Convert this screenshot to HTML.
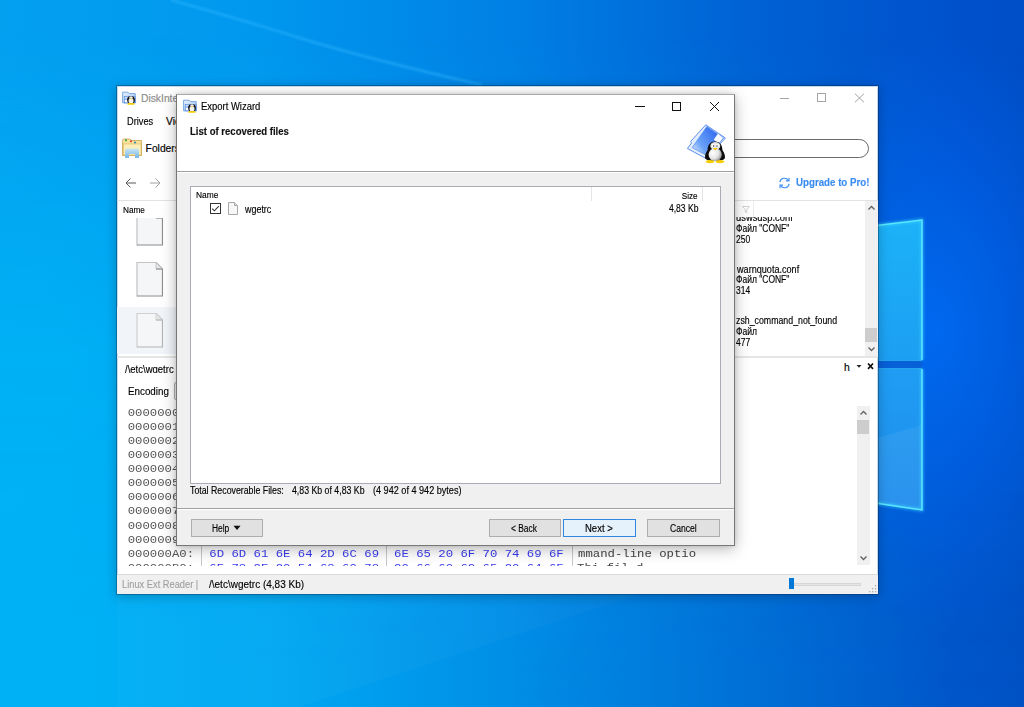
<!DOCTYPE html>
<html><head><meta charset="utf-8">
<style>
*{margin:0;padding:0;box-sizing:border-box}
html,body{width:1024px;height:707px;overflow:hidden}
body{position:relative;font-family:"Liberation Sans",sans-serif;font-size:12px;color:#000;background:#0080e4}
.a{position:absolute;white-space:nowrap}
.t{position:absolute;white-space:nowrap;line-height:1;-webkit-text-stroke:0.15px currentColor}
</style></head><body>
<svg class="a" style="left:0;top:0" width="1024" height="707" viewBox="0 0 1024 707">
<defs>
<linearGradient id="gt" x1="0" y1="0" x2="1024" y2="0" gradientUnits="userSpaceOnUse">
<stop offset="0" stop-color="#04a0f0"/><stop offset="0.06" stop-color="#039eef"/><stop offset="0.25" stop-color="#0098ef"/><stop offset="0.5" stop-color="#0080e4"/><stop offset="0.73" stop-color="#0062d4"/><stop offset="0.94" stop-color="#0050cc"/><stop offset="1" stop-color="#004ec8"/>
</linearGradient>
<linearGradient id="gb" x1="0" y1="0" x2="1024" y2="0" gradientUnits="userSpaceOnUse">
<stop offset="0" stop-color="#00b2f5"/><stop offset="0.06" stop-color="#00b2f5"/><stop offset="0.27" stop-color="#00a8f2"/><stop offset="0.5" stop-color="#008ee6"/><stop offset="0.73" stop-color="#0070d6"/><stop offset="0.94" stop-color="#0055c8"/><stop offset="1" stop-color="#0052c4"/>
</linearGradient>
<linearGradient id="gm" x1="0" y1="0" x2="0" y2="707" gradientUnits="userSpaceOnUse">
<stop offset="0.05" stop-color="#fff" stop-opacity="0"/><stop offset="0.5" stop-color="#fff" stop-opacity="0.9"/><stop offset="1" stop-color="#fff" stop-opacity="1"/>
</linearGradient>
<mask id="mb"><rect width="1024" height="707" fill="url(#gm)"/></mask>
<radialGradient id="glow" cx="0" cy="0" r="1" gradientUnits="userSpaceOnUse" gradientTransform="translate(935 330) scale(170 300)">
<stop offset="0" stop-color="#006cf6" stop-opacity="0.85"/><stop offset="0.55" stop-color="#0064f0" stop-opacity="0.45"/><stop offset="1" stop-color="#0060ee" stop-opacity="0"/>
</radialGradient>
<linearGradient id="pu" x1="0" y1="220" x2="0" y2="360" gradientUnits="userSpaceOnUse"><stop offset="0" stop-color="#1cb2f8"/><stop offset="1" stop-color="#1c9ff2"/></linearGradient>
<linearGradient id="pl" x1="0" y1="369" x2="0" y2="510" gradientUnits="userSpaceOnUse"><stop offset="0" stop-color="#1f9df3"/><stop offset="1" stop-color="#1e8cec"/></linearGradient>
<filter id="bl" x="-20%" y="-20%" width="140%" height="140%"><feGaussianBlur stdDeviation="1.6"/></filter>
</defs>
<rect width="1024" height="707" fill="url(#gt)"/>
<rect width="1024" height="707" fill="url(#gb)" mask="url(#mb)"/>
<rect width="1024" height="707" fill="url(#glow)"/>
<rect x="870" y="359" width="52" height="11" fill="#0860d8"/>
<polygon points="870,226.2 922,220 922,360 870,360" fill="url(#pu)"/>
<polygon points="870,369 922,369 922,510 870,502.3" fill="url(#pl)"/>
<polygon points="870,440 922,425 922,510 870,502" fill="#fff" opacity="0.06"/>
<g filter="url(#bl)" opacity="0.6">
<polyline points="870,226.2 922,220 922,360" fill="none" stroke="#40d8ff" stroke-width="3"/>
<polyline points="870,502.3 922,510 922,369" fill="none" stroke="#40d8ff" stroke-width="3"/>
</g>
<polyline points="870,226.2 922,220 922,360" fill="none" stroke="#5ae6ff" stroke-width="1.5"/>
<polyline points="870,502.3 922,510 922,369" fill="none" stroke="#5ae6ff" stroke-width="1.5"/>
<polyline points="870,360.5 922,360.5" fill="none" stroke="#38c0f8" stroke-width="1" opacity="0.7"/>
<polyline points="870,368.5 922,368.5" fill="none" stroke="#38c0f8" stroke-width="1" opacity="0.7"/>
<filter id="rb" x="-10%" y="-50%" width="120%" height="200%"><feGaussianBlur stdDeviation="0.9"/></filter>
<path d="M171 0 Q 236 18 300 37.9 T 482 85" fill="none" stroke="#30b8ff" stroke-opacity="0.5" stroke-width="2.6" filter="url(#rb)"/>
<polygon points="117,594 640,594 300,707 117,707" fill="#ffffff" opacity="0.025"/>
</svg>

<div class="a" style="left:116px;top:85px;width:763px;height:510px;background:#fff;background-clip:padding-box;border:1px solid rgba(0,25,60,.32);box-shadow:0 2px 10px rgba(0,0,0,.22),inset 0 0 0 1px rgba(0,80,140,.22)"></div>
<svg class="a" style="left:122px;top:91px" width="14" height="14" viewBox="0 0 14 14">
<defs><linearGradient id="af122" x1="0" y1="0" x2="1" y2="1"><stop offset="0" stop-color="#e8f2fd"/><stop offset="1" stop-color="#9cc4f2"/></linearGradient>
<linearGradient id="ag122" x1="0" y1="0" x2="0" y2="1"><stop offset="0" stop-color="#d8e8fb"/><stop offset="1" stop-color="#4d8de6"/></linearGradient></defs>
<path d="M0.6 1.2 H6 L7.5 2.6 H13.2 V11.8 H0.6 Z" fill="url(#af122)" stroke="#6d9fe2" stroke-width="0.9"/>
<rect x="2.2" y="5.4" width="11" height="6.6" fill="url(#ag122)" stroke="#4f86de" stroke-width="0.6"/>
<rect x="2.8" y="9" width="3" height="2.4" fill="#fff"/>
<ellipse cx="9" cy="8.8" rx="3.9" ry="3.9" fill="#151515"/>
<ellipse cx="9" cy="9.8" rx="2.5" ry="2.8" fill="#f2f2f2"/>
<ellipse cx="9" cy="6.6" rx="1.7" ry="1.4" fill="#e8e8e8"/>
<path d="M8.1 7.5 L9.9 7.5 L9 8.7Z" fill="#f0c800"/>
<ellipse cx="7.3" cy="12.9" rx="2.1" ry="0.9" fill="#f5d000"/>
<ellipse cx="10.7" cy="12.9" rx="2.1" ry="0.9" fill="#f5d000"/>
</svg>
<span id="t0" class="t" style="left:141.00px;top:94.48px;font-size:10.3px;font-weight:normal;color:#8c8c8c;font-family:'Liberation Sans',sans-serif;">DiskInternals Linux Reader</span>
<div class="a" style="left:780px;top:98px;width:9px;height:1px;background:#a4a4a4"></div>
<div class="a" style="left:817px;top:93px;width:9px;height:9px;border:1px solid #a4a4a4"></div>
<svg class="a" style="left:854px;top:93px" width="11" height="10" viewBox="0 0 11 10"><path d="M1 0.8 L10 9.2 M10 0.8 L1 9.2" stroke="#a4a4a4" stroke-width="1"/></svg>
<span id="t1" class="t" style="left:126.80px;top:117.18px;font-size:10.3px;font-weight:normal;color:#000;font-family:'Liberation Sans',sans-serif;transform:scaleX(0.8957);transform-origin:left top;">Drives</span>
<span id="t2" class="t" style="left:166.10px;top:117.18px;font-size:10.3px;font-weight:normal;color:#000;font-family:'Liberation Sans',sans-serif;">View</span>
<svg class="a" style="left:122px;top:138px" width="22" height="22" viewBox="0 0 22 22">
<defs><linearGradient id="fy" x1="0" y1="0" x2="0" y2="1"><stop offset="0" stop-color="#f8e6a6"/><stop offset="1" stop-color="#e9c766"/></linearGradient>
<linearGradient id="fb" x1="0" y1="0" x2="0" y2="1"><stop offset="0" stop-color="#c6e4f6"/><stop offset="1" stop-color="#6fb4e4"/></linearGradient></defs>
<path d="M0.5 2.5 Q0.5 1 2 1 H8 L9.5 2.5 H19.5 V17.5 H0.5 Z" fill="url(#fy)" stroke="#c9a550" stroke-width="0.8"/>
<rect x="1.5" y="6" width="17.5" height="11" fill="#fbeeb8" stroke="#d9b65c" stroke-width="0.5"/>
<circle cx="4" cy="2.2" r="1" fill="#2a9a3a"/><circle cx="9" cy="3.2" r="1" fill="#e03020"/><circle cx="13" cy="4.5" r="1" fill="#2a7fd0"/>
<path d="M3 20 V12.5 Q3 10.5 5 10.5 H15 Q17 10.5 17 12.5 V20 H13 V16 H7 V20 Z" fill="url(#fb)" opacity="0.95"/>
</svg>
<span id="t3" class="t" style="left:145.60px;top:144.18px;font-size:10.3px;font-weight:normal;color:#000;font-family:'Liberation Sans',sans-serif;">Folders</span>
<svg class="a" style="left:124px;top:177px" width="40" height="13" viewBox="0 0 40 13"><path d="M6.5 1.5 L2 6 L6.5 10.5 M2 6 H12" fill="none" stroke="#5a5a5a" stroke-width="1"/><path d="M31.5 1.5 L36 6 L31.5 10.5 M36 6 H26" fill="none" stroke="#a0a0a0" stroke-width="1"/></svg>
<div class="a" style="left:560px;top:139px;width:309px;height:19px;border:1.4px solid #6a6a6a;border-radius:10px"></div>
<svg class="a" style="left:778px;top:177px" width="13" height="12" viewBox="0 0 13 12"><path d="M1.8 5.2 A4.7 4.7 0 0 1 10.4 3.4 M11.2 6.8 A4.7 4.7 0 0 1 2.6 8.6" fill="none" stroke="#3a8cf2" stroke-width="1.1"/><path d="M11 0.8 V3.9 H7.9" fill="none" stroke="#3a8cf2" stroke-width="1.1"/><path d="M2 11.2 V8.1 H5.1" fill="none" stroke="#3a8cf2" stroke-width="1.1"/></svg>
<span id="t4" class="t" style="left:795.70px;top:177.27px;font-size:10.9px;font-weight:bold;color:#3a8cf2;font-family:'Liberation Sans',sans-serif;transform:scaleX(0.8927);transform-origin:left top;">Upgrade to Pro!</span>
<div class="a" style="left:117px;top:200px;width:761px;height:1px;background:#e2e2e2"></div>
<span id="t5" class="t" style="left:123.00px;top:205.26px;font-size:9.5px;font-weight:normal;color:#000;font-family:'Liberation Sans',sans-serif;transform:scaleX(0.8660);transform-origin:left top;">Name</span>
<div class="a" style="left:117px;top:218px;width:60px;height:138px;overflow:hidden"><div class="a" style="left:0;top:88.5px;width:60px;height:47.5px;background:#f1f5fa"></div><svg class="a" style="left:19px;top:-7.5px" width="27" height="35" viewBox="0 0 27 35">
<path d="M0.5 0.5 H20 L26.5 7 V34.5 H0.5 Z" fill="#f5f6f8"/>
<path d="M1 34.5 V0.5 H20" fill="none" stroke="#c4c4c4" stroke-width="1.2"/>
<path d="M20 0.5 L26.5 7 V34 H1" fill="none" stroke="#8e8e8e" stroke-width="1.2"/>
<path d="M20 0.5 V7 H26.5Z" fill="#e6e6e6" stroke="#c4c4c4" stroke-width="0.8"/>
<path d="M20 7 H26.5" fill="none" stroke="#8e8e8e" stroke-width="1.1"/>
</svg><svg class="a" style="left:19px;top:44px" width="27" height="35" viewBox="0 0 27 35">
<path d="M0.5 0.5 H20 L26.5 7 V34.5 H0.5 Z" fill="#f5f6f8"/>
<path d="M1 34.5 V0.5 H20" fill="none" stroke="#c4c4c4" stroke-width="1.2"/>
<path d="M20 0.5 L26.5 7 V34 H1" fill="none" stroke="#8e8e8e" stroke-width="1.2"/>
<path d="M20 0.5 V7 H26.5Z" fill="#e6e6e6" stroke="#c4c4c4" stroke-width="0.8"/>
<path d="M20 7 H26.5" fill="none" stroke="#8e8e8e" stroke-width="1.1"/>
</svg><svg class="a" style="left:19px;top:95px" width="27" height="35" viewBox="0 0 27 35">
<path d="M0.5 0.5 H20 L26.5 7 V34.5 H0.5 Z" fill="#f5f6f8"/>
<path d="M1 34.5 V0.5 H20" fill="none" stroke="#d0d0d0" stroke-width="1.2"/>
<path d="M20 0.5 L26.5 7 V34 H1" fill="none" stroke="#b4b4b4" stroke-width="1.2"/>
<path d="M20 0.5 V7 H26.5Z" fill="#e6e6e6" stroke="#d0d0d0" stroke-width="0.8"/>
<path d="M20 7 H26.5" fill="none" stroke="#b4b4b4" stroke-width="1.1"/>
</svg></div>
<svg class="a" style="left:742px;top:206px" width="8" height="8" viewBox="0 0 8 8"><path d="M0.5 0.5 H7.5 L4.8 3.5 V6.8 L3.2 6 V3.5 Z" fill="none" stroke="#c8c8c8" stroke-width="0.8"/></svg>
<div class="a" style="left:753px;top:201px;width:1px;height:15px;background:#ececec"></div>
<div class="a" style="left:734px;top:217.3px;width:131px;height:138.7px;overflow:hidden">
<span id="t6" class="t" style="left:2.00px;top:-3.96px;font-size:10px;font-weight:normal;color:#000;font-family:'Liberation Sans',sans-serif;transform:scaleX(0.9374);transform-origin:left top;">uswsusp.conf</span>
<span id="t7" class="t" style="left:2.00px;top:6.94px;font-size:10px;font-weight:normal;color:#000;font-family:'Liberation Sans',sans-serif;transform:scaleX(0.8491);transform-origin:left top;">Файл "CONF"</span>
<span id="t8" class="t" style="left:2.00px;top:17.84px;font-size:10px;font-weight:normal;color:#000;font-family:'Liberation Sans',sans-serif;transform:scaleX(0.8468);transform-origin:left top;">250</span>
<span id="t9" class="t" style="left:2.91px;top:47.23px;font-size:10px;font-weight:normal;color:#000;font-family:'Liberation Sans',sans-serif;transform:scaleX(0.9095);transform-origin:left top;">warnquota.conf</span>
<span id="t10" class="t" style="left:2.00px;top:58.13px;font-size:10px;font-weight:normal;color:#000;font-family:'Liberation Sans',sans-serif;transform:scaleX(0.8491);transform-origin:left top;">Файл "CONF"</span>
<span id="t11" class="t" style="left:2.00px;top:69.03px;font-size:10px;font-weight:normal;color:#000;font-family:'Liberation Sans',sans-serif;transform:scaleX(0.8468);transform-origin:left top;">314</span>
<span id="t12" class="t" style="left:2.00px;top:98.44px;font-size:10px;font-weight:normal;color:#000;font-family:'Liberation Sans',sans-serif;transform:scaleX(0.8785);transform-origin:left top;">zsh_command_not_found</span>
<span id="t13" class="t" style="left:2.00px;top:109.34px;font-size:10px;font-weight:normal;color:#000;font-family:'Liberation Sans',sans-serif;transform:scaleX(0.8566);transform-origin:left top;">Файл</span>
<span id="t14" class="t" style="left:2.00px;top:120.24px;font-size:10px;font-weight:normal;color:#000;font-family:'Liberation Sans',sans-serif;transform:scaleX(0.8468);transform-origin:left top;">477</span>
</div>
<div class="a" style="left:865px;top:201px;width:13px;height:155px;background:#f0f0f0"></div>
<svg class="a" style="left:865px;top:203px" width="13" height="10" viewBox="0 0 13 10"><path d="M3.5 6.5 L6.5 3.5 L9.5 6.5" fill="none" stroke="#606060" stroke-width="1.3"/></svg>
<div class="a" style="left:865px;top:328px;width:12px;height:14px;background:#cdcdcd"></div>
<svg class="a" style="left:865px;top:344px" width="13" height="10" viewBox="0 0 13 10"><path d="M3.5 3.5 L6.5 6.5 L9.5 3.5" fill="none" stroke="#606060" stroke-width="1.3"/></svg>
<div class="a" style="left:117px;top:356px;width:761px;height:2px;background:#e6e6e6"></div>
<div class="a" style="left:117px;top:358px;width:60px;height:14.6px;overflow:hidden"><span id="t15" class="t" style="left:8.30px;top:6.54px;font-size:10px;font-weight:normal;color:#000;font-family:'Liberation Sans',sans-serif;transform:scaleX(0.9525);transform-origin:left top;">/\etc\wgetrc</span></div>
<span id="t16" class="t" style="left:844.00px;top:362.78px;font-size:10.3px;font-weight:normal;color:#000;font-family:'Liberation Sans',sans-serif;">h</span>
<svg class="a" style="left:855px;top:362px" width="20" height="9" viewBox="0 0 20 9"><path d="M1.5 3 H6.5 L4 5.8Z" fill="#222"/><path d="M13 1.5 L18 6.8 M18 1.5 L13 6.8" stroke="#111" stroke-width="1.7"/></svg>
<span id="t17" class="t" style="left:128.40px;top:386.78px;font-size:10.3px;font-weight:normal;color:#000;font-family:'Liberation Sans',sans-serif;transform:scaleX(0.9512);transform-origin:left top;">Encoding</span>
<div class="a" style="left:174px;top:382px;width:30px;height:18px;border:1px solid #adadad;border-radius:2px;background:#efefef"></div>
<div class="a" style="left:117px;top:402px;width:740px;height:163.7px;overflow:hidden">
<span id="t18" class="t" style="left:10.70px;top:5.07px;font-size:12.3px;font-weight:normal;color:#555;font-family:'Liberation Mono',monospace;-webkit-text-stroke:0;transform:scaleY(0.88);transform-origin:0 7.9px">00000000:</span>
<span id="t19" class="t" style="left:92.30px;top:5.07px;font-size:12.3px;font-weight:normal;color:#3a3aee;font-family:'Liberation Mono',monospace;-webkit-text-stroke:0;transform:scaleY(0.88);transform-origin:0 7.9px">23 23 23 0A 23 23 23 20</span>
<span id="t20" class="t" style="left:277.00px;top:5.07px;font-size:12.3px;font-weight:normal;color:#3a3aee;font-family:'Liberation Mono',monospace;-webkit-text-stroke:0;transform:scaleY(0.88);transform-origin:0 7.9px">53 61 6D 70 6C 65 20 57</span>
<span id="t21" class="t" style="left:461.00px;top:5.07px;font-size:12.3px;font-weight:normal;color:#444;font-family:'Liberation Mono',monospace;-webkit-text-stroke:0;transform:scaleY(0.88);transform-origin:0 7.9px">###.### Sample W</span>
<span id="t22" class="t" style="left:10.70px;top:19.13px;font-size:12.3px;font-weight:normal;color:#555;font-family:'Liberation Mono',monospace;-webkit-text-stroke:0;transform:scaleY(0.88);transform-origin:0 7.9px">00000010:</span>
<span id="t23" class="t" style="left:92.30px;top:19.13px;font-size:12.3px;font-weight:normal;color:#3a3aee;font-family:'Liberation Mono',monospace;-webkit-text-stroke:0;transform:scaleY(0.88);transform-origin:0 7.9px">67 65 74 20 69 6E 69 74</span>
<span id="t24" class="t" style="left:277.00px;top:19.13px;font-size:12.3px;font-weight:normal;color:#3a3aee;font-family:'Liberation Mono',monospace;-webkit-text-stroke:0;transform:scaleY(0.88);transform-origin:0 7.9px">69 61 6C 69 7A 61 74 69</span>
<span id="t25" class="t" style="left:461.00px;top:19.13px;font-size:12.3px;font-weight:normal;color:#444;font-family:'Liberation Mono',monospace;-webkit-text-stroke:0;transform:scaleY(0.88);transform-origin:0 7.9px">get initializati</span>
<span id="t26" class="t" style="left:10.70px;top:33.19px;font-size:12.3px;font-weight:normal;color:#555;font-family:'Liberation Mono',monospace;-webkit-text-stroke:0;transform:scaleY(0.88);transform-origin:0 7.9px">00000020:</span>
<span id="t27" class="t" style="left:92.30px;top:33.19px;font-size:12.3px;font-weight:normal;color:#3a3aee;font-family:'Liberation Mono',monospace;-webkit-text-stroke:0;transform:scaleY(0.88);transform-origin:0 7.9px">6F 6E 20 66 69 6C 65 20</span>
<span id="t28" class="t" style="left:277.00px;top:33.19px;font-size:12.3px;font-weight:normal;color:#3a3aee;font-family:'Liberation Mono',monospace;-webkit-text-stroke:0;transform:scaleY(0.88);transform-origin:0 7.9px">2E 77 67 65 74 72 63 0A</span>
<span id="t29" class="t" style="left:461.00px;top:33.19px;font-size:12.3px;font-weight:normal;color:#444;font-family:'Liberation Mono',monospace;-webkit-text-stroke:0;transform:scaleY(0.88);transform-origin:0 7.9px">on file .wgetrc.</span>
<span id="t30" class="t" style="left:10.70px;top:47.25px;font-size:12.3px;font-weight:normal;color:#555;font-family:'Liberation Mono',monospace;-webkit-text-stroke:0;transform:scaleY(0.88);transform-origin:0 7.9px">00000030:</span>
<span id="t31" class="t" style="left:92.30px;top:47.25px;font-size:12.3px;font-weight:normal;color:#3a3aee;font-family:'Liberation Mono',monospace;-webkit-text-stroke:0;transform:scaleY(0.88);transform-origin:0 7.9px">23 23 23 0A 0A 23 23 20</span>
<span id="t32" class="t" style="left:277.00px;top:47.25px;font-size:12.3px;font-weight:normal;color:#3a3aee;font-family:'Liberation Mono',monospace;-webkit-text-stroke:0;transform:scaleY(0.88);transform-origin:0 7.9px">59 6F 75 20 63 61 6E 20</span>
<span id="t33" class="t" style="left:461.00px;top:47.25px;font-size:12.3px;font-weight:normal;color:#444;font-family:'Liberation Mono',monospace;-webkit-text-stroke:0;transform:scaleY(0.88);transform-origin:0 7.9px">###..## You can </span>
<span id="t34" class="t" style="left:10.70px;top:61.31px;font-size:12.3px;font-weight:normal;color:#555;font-family:'Liberation Mono',monospace;-webkit-text-stroke:0;transform:scaleY(0.88);transform-origin:0 7.9px">00000040:</span>
<span id="t35" class="t" style="left:92.30px;top:61.31px;font-size:12.3px;font-weight:normal;color:#3a3aee;font-family:'Liberation Mono',monospace;-webkit-text-stroke:0;transform:scaleY(0.88);transform-origin:0 7.9px">75 73 65 20 74 68 69 73</span>
<span id="t36" class="t" style="left:277.00px;top:61.31px;font-size:12.3px;font-weight:normal;color:#3a3aee;font-family:'Liberation Mono',monospace;-webkit-text-stroke:0;transform:scaleY(0.88);transform-origin:0 7.9px">20 66 69 6C 65 20 74 6F</span>
<span id="t37" class="t" style="left:460.00px;top:61.31px;font-size:12.3px;font-weight:normal;color:#444;font-family:'Liberation Mono',monospace;-webkit-text-stroke:0;transform:scaleY(0.88);transform-origin:0 7.9px">use this file to</span>
<span id="t38" class="t" style="left:10.70px;top:75.37px;font-size:12.3px;font-weight:normal;color:#555;font-family:'Liberation Mono',monospace;-webkit-text-stroke:0;transform:scaleY(0.88);transform-origin:0 7.9px">00000050:</span>
<span id="t39" class="t" style="left:92.30px;top:75.37px;font-size:12.3px;font-weight:normal;color:#3a3aee;font-family:'Liberation Mono',monospace;-webkit-text-stroke:0;transform:scaleY(0.88);transform-origin:0 7.9px">20 63 68 61 6E 67 65 20</span>
<span id="t40" class="t" style="left:277.00px;top:75.37px;font-size:12.3px;font-weight:normal;color:#3a3aee;font-family:'Liberation Mono',monospace;-webkit-text-stroke:0;transform:scaleY(0.88);transform-origin:0 7.9px">74 68 65 20 64 65 66 61</span>
<span id="t41" class="t" style="left:453.62px;top:75.37px;font-size:12.3px;font-weight:normal;color:#444;font-family:'Liberation Mono',monospace;-webkit-text-stroke:0;transform:scaleY(0.88);transform-origin:0 7.9px"> change the defa</span>
<span id="t42" class="t" style="left:10.70px;top:89.43px;font-size:12.3px;font-weight:normal;color:#555;font-family:'Liberation Mono',monospace;-webkit-text-stroke:0;transform:scaleY(0.88);transform-origin:0 7.9px">00000060:</span>
<span id="t43" class="t" style="left:92.30px;top:89.43px;font-size:12.3px;font-weight:normal;color:#3a3aee;font-family:'Liberation Mono',monospace;-webkit-text-stroke:0;transform:scaleY(0.88);transform-origin:0 7.9px">75 6C 74 20 62 65 68 61</span>
<span id="t44" class="t" style="left:277.00px;top:89.43px;font-size:12.3px;font-weight:normal;color:#3a3aee;font-family:'Liberation Mono',monospace;-webkit-text-stroke:0;transform:scaleY(0.88);transform-origin:0 7.9px">76 69 6F 75 72 20 6F 66</span>
<span id="t45" class="t" style="left:460.00px;top:89.43px;font-size:12.3px;font-weight:normal;color:#444;font-family:'Liberation Mono',monospace;-webkit-text-stroke:0;transform:scaleY(0.88);transform-origin:0 7.9px">ult behaviour of</span>
<span id="t46" class="t" style="left:10.70px;top:103.49px;font-size:12.3px;font-weight:normal;color:#555;font-family:'Liberation Mono',monospace;-webkit-text-stroke:0;transform:scaleY(0.88);transform-origin:0 7.9px">00000070:</span>
<span id="t47" class="t" style="left:92.30px;top:103.49px;font-size:12.3px;font-weight:normal;color:#3a3aee;font-family:'Liberation Mono',monospace;-webkit-text-stroke:0;transform:scaleY(0.88);transform-origin:0 7.9px">20 77 67 65 74 20 6F 72</span>
<span id="t48" class="t" style="left:277.00px;top:103.49px;font-size:12.3px;font-weight:normal;color:#3a3aee;font-family:'Liberation Mono',monospace;-webkit-text-stroke:0;transform:scaleY(0.88);transform-origin:0 7.9px">20 74 6F 0A 23 23 20 61</span>
<span id="t49" class="t" style="left:453.62px;top:103.49px;font-size:12.3px;font-weight:normal;color:#444;font-family:'Liberation Mono',monospace;-webkit-text-stroke:0;transform:scaleY(0.88);transform-origin:0 7.9px"> wget or to.## a</span>
<span id="t50" class="t" style="left:10.70px;top:117.55px;font-size:12.3px;font-weight:normal;color:#555;font-family:'Liberation Mono',monospace;-webkit-text-stroke:0;transform:scaleY(0.88);transform-origin:0 7.9px">00000080:</span>
<span id="t51" class="t" style="left:92.30px;top:117.55px;font-size:12.3px;font-weight:normal;color:#3a3aee;font-family:'Liberation Mono',monospace;-webkit-text-stroke:0;transform:scaleY(0.88);transform-origin:0 7.9px">76 6F 69 64 20 68 61 76</span>
<span id="t52" class="t" style="left:277.00px;top:117.55px;font-size:12.3px;font-weight:normal;color:#3a3aee;font-family:'Liberation Mono',monospace;-webkit-text-stroke:0;transform:scaleY(0.88);transform-origin:0 7.9px">69 6E 67 20 74 6F 20 74</span>
<span id="t53" class="t" style="left:461.00px;top:117.55px;font-size:12.3px;font-weight:normal;color:#444;font-family:'Liberation Mono',monospace;-webkit-text-stroke:0;transform:scaleY(0.88);transform-origin:0 7.9px">void having to t</span>
<span id="t54" class="t" style="left:10.70px;top:131.61px;font-size:12.3px;font-weight:normal;color:#555;font-family:'Liberation Mono',monospace;-webkit-text-stroke:0;transform:scaleY(0.88);transform-origin:0 7.9px">00000090:</span>
<span id="t55" class="t" style="left:92.30px;top:131.61px;font-size:12.3px;font-weight:normal;color:#3a3aee;font-family:'Liberation Mono',monospace;-webkit-text-stroke:0;transform:scaleY(0.88);transform-origin:0 7.9px">79 70 65 20 6D 61 6E 79</span>
<span id="t56" class="t" style="left:277.00px;top:131.61px;font-size:12.3px;font-weight:normal;color:#3a3aee;font-family:'Liberation Mono',monospace;-webkit-text-stroke:0;transform:scaleY(0.88);transform-origin:0 7.9px">20 6D 61 6E 79 20 63 6F</span>
<span id="t57" class="t" style="left:461.00px;top:131.61px;font-size:12.3px;font-weight:normal;color:#444;font-family:'Liberation Mono',monospace;-webkit-text-stroke:0;transform:scaleY(0.88);transform-origin:0 7.9px">ype many many co</span>
<span id="t58" class="t" style="left:10.70px;top:145.67px;font-size:12.3px;font-weight:normal;color:#555;font-family:'Liberation Mono',monospace;-webkit-text-stroke:0;transform:scaleY(0.88);transform-origin:0 7.9px">000000A0:</span>
<span id="t59" class="t" style="left:92.30px;top:145.67px;font-size:12.3px;font-weight:normal;color:#3a3aee;font-family:'Liberation Mono',monospace;-webkit-text-stroke:0;transform:scaleY(0.88);transform-origin:0 7.9px">6D 6D 61 6E 64 2D 6C 69</span>
<span id="t60" class="t" style="left:277.00px;top:145.67px;font-size:12.3px;font-weight:normal;color:#3a3aee;font-family:'Liberation Mono',monospace;-webkit-text-stroke:0;transform:scaleY(0.88);transform-origin:0 7.9px">6E 65 20 6F 70 74 69 6F</span>
<span id="t61" class="t" style="left:461.00px;top:145.67px;font-size:12.3px;font-weight:normal;color:#444;font-family:'Liberation Mono',monospace;-webkit-text-stroke:0;transform:scaleY(0.88);transform-origin:0 7.9px">mmand-line optio</span>
<span id="t62" class="t" style="left:10.70px;top:159.73px;font-size:12.3px;font-weight:normal;color:#555;font-family:'Liberation Mono',monospace;-webkit-text-stroke:0;transform:scaleY(0.88);transform-origin:0 7.9px">000000B0:</span>
<span id="t63" class="t" style="left:92.30px;top:159.73px;font-size:12.3px;font-weight:normal;color:#3a3aee;font-family:'Liberation Mono',monospace;-webkit-text-stroke:0;transform:scaleY(0.88);transform-origin:0 7.9px">6E 73 2E 20 54 68 69 73</span>
<span id="t64" class="t" style="left:277.00px;top:159.73px;font-size:12.3px;font-weight:normal;color:#3a3aee;font-family:'Liberation Mono',monospace;-webkit-text-stroke:0;transform:scaleY(0.88);transform-origin:0 7.9px">20 66 69 6C 65 20 64 6F</span>
<span id="t65" class="t" style="left:460.00px;top:159.73px;font-size:12.3px;font-weight:normal;color:#444;font-family:'Liberation Mono',monospace;-webkit-text-stroke:0;transform:scaleY(0.88);transform-origin:0 7.9px">    Thi  fil  d </span>
<div class="a" style="left:84px;top:0;width:1px;height:164px;background:#c8c8c8"></div>
<div class="a" style="left:269px;top:0;width:1px;height:164px;background:#c8c8c8"></div>
<div class="a" style="left:455px;top:0;width:1px;height:164px;background:#c8c8c8"></div>
</div>
<div class="a" style="left:857px;top:406px;width:13px;height:159px;background:#f0f0f0"></div>
<svg class="a" style="left:857px;top:408px" width="13" height="10" viewBox="0 0 13 10"><path d="M3.5 6.5 L6.5 3.5 L9.5 6.5" fill="none" stroke="#606060" stroke-width="1.3"/></svg>
<div class="a" style="left:857px;top:420px;width:12px;height:14px;background:#cdcdcd"></div>
<svg class="a" style="left:857px;top:553px" width="13" height="10" viewBox="0 0 13 10"><path d="M3.5 3.5 L6.5 6.5 L9.5 3.5" fill="none" stroke="#606060" stroke-width="1.3"/></svg>
<div class="a" style="left:117px;top:574px;width:761px;height:20px;background:#f0f0f0;border-top:1px solid #dadada"></div>
<span id="t66" class="t" style="left:121.80px;top:578.72px;font-size:11.2px;font-weight:normal;color:#a0a0a0;font-family:'Liberation Sans',sans-serif;transform:scaleX(0.8303);transform-origin:left top;">Linux Ext Reader |</span>
<span id="t67" class="t" style="left:208.75px;top:578.72px;font-size:11.2px;font-weight:normal;color:#000;font-family:'Liberation Sans',sans-serif;transform:scaleX(0.8940);transform-origin:left top;">/\etc\wgetrc (4,83 Kb)</span>
<div class="a" style="left:794px;top:583px;width:67px;height:3px;background:#e6e6e6;border:1px solid #d6d6d6"></div>
<div class="a" style="left:789px;top:578px;width:5px;height:11px;background:#0078d7"></div>
<svg class="a" style="left:869px;top:585px" width="9" height="9" viewBox="0 0 9 9"><g fill="#b0b0b0"><rect x="6" y="0" width="1.3" height="1.3"/><rect x="3" y="3" width="1.3" height="1.3"/><rect x="6" y="3" width="1.3" height="1.3"/><rect x="0" y="6" width="1.3" height="1.3"/><rect x="3" y="6" width="1.3" height="1.3"/><rect x="6" y="6" width="1.3" height="1.3"/></g></svg>
<div class="a" style="left:176px;top:94px;width:559px;height:452px;background:#f0f0f0;border:1px solid #777;border-top-color:#a8a8a8;box-shadow:0 3px 14px rgba(0,0,0,.28),0 0 4px rgba(0,0,0,.12)"></div>
<div class="a" style="left:177px;top:95px;width:557px;height:76px;background:#fff"></div>
<div class="a" style="left:177px;top:171px;width:557px;height:1px;background:#a0a0a0"></div>
<div class="a" style="left:177px;top:172px;width:557px;height:1px;background:#fff"></div>
<svg class="a" style="left:183px;top:99px" width="14" height="14" viewBox="0 0 14 14">
<defs><linearGradient id="af183" x1="0" y1="0" x2="1" y2="1"><stop offset="0" stop-color="#e8f2fd"/><stop offset="1" stop-color="#9cc4f2"/></linearGradient>
<linearGradient id="ag183" x1="0" y1="0" x2="0" y2="1"><stop offset="0" stop-color="#d8e8fb"/><stop offset="1" stop-color="#4d8de6"/></linearGradient></defs>
<path d="M0.6 1.2 H6 L7.5 2.6 H13.2 V11.8 H0.6 Z" fill="url(#af183)" stroke="#6d9fe2" stroke-width="0.9"/>
<rect x="2.2" y="5.4" width="11" height="6.6" fill="url(#ag183)" stroke="#4f86de" stroke-width="0.6"/>
<rect x="2.8" y="9" width="3" height="2.4" fill="#fff"/>
<ellipse cx="9" cy="8.8" rx="3.9" ry="3.9" fill="#151515"/>
<ellipse cx="9" cy="9.8" rx="2.5" ry="2.8" fill="#f2f2f2"/>
<ellipse cx="9" cy="6.6" rx="1.7" ry="1.4" fill="#e8e8e8"/>
<path d="M8.1 7.5 L9.9 7.5 L9 8.7Z" fill="#f0c800"/>
<ellipse cx="7.3" cy="12.9" rx="2.1" ry="0.9" fill="#f5d000"/>
<ellipse cx="10.7" cy="12.9" rx="2.1" ry="0.9" fill="#f5d000"/>
</svg>
<span id="t68" class="t" style="left:200.80px;top:102.30px;font-size:10.4px;font-weight:normal;color:#000;font-family:'Liberation Sans',sans-serif;transform:scaleX(0.9089);transform-origin:left top;">Export Wizard</span>
<div class="a" style="left:635px;top:106px;width:10px;height:1px;background:#111"></div>
<div class="a" style="left:672px;top:102px;width:9px;height:9px;border:1px solid #111"></div>
<svg class="a" style="left:709px;top:101px" width="11" height="11" viewBox="0 0 11 11"><path d="M1 1 L10 10 M10 1 L1 10" stroke="#111" stroke-width="1"/></svg>
<span id="t69" class="t" style="left:190.30px;top:127.35px;font-size:10.1px;font-weight:bold;color:#111;font-family:'Liberation Sans',sans-serif;transform:scaleX(0.9472);transform-origin:left top;">List of recovered files</span>
<svg class="a" style="left:682px;top:120px" width="48" height="48" viewBox="0 0 48 48">
<defs>
<linearGradient id="blf" x1="10" y1="30" x2="38" y2="10" gradientUnits="userSpaceOnUse"><stop offset="0" stop-color="#cfe0fc"/><stop offset="0.3" stop-color="#6aa2f8"/><stop offset="1" stop-color="#2a62ee"/></linearGradient>
<radialGradient id="bel" cx="31" cy="33" r="9" gradientUnits="userSpaceOnUse"><stop offset="0" stop-color="#ffffff"/><stop offset="0.6" stop-color="#e6e6e6"/><stop offset="1" stop-color="#9a9a9a"/></radialGradient>
</defs>
<polygon points="23.8,4.8 43.4,18 24.4,38.7 5.4,28.5 9.6,23 8.6,21.5 11.5,18.3" fill="#e2eefe" stroke="#5f90ea" stroke-width="1"/>
<polygon points="24.8,6.6 41.6,18 26,36 10.2,27.6" fill="url(#blf)" stroke="#5b8ff0" stroke-width="0.8"/>
<polygon points="36.2,13.3 41.6,18 36.5,24 31.8,19.6" fill="#f6f9ff"/>
<path d="M36.2,13.3 L41.6,18 L36.5,24" fill="none" stroke="#6a98ee" stroke-width="0.8"/>
<path d="M33 21.5 C27.5 21.5 25.5 26 25.6 30 C23.5 33 22.6 36 23.2 38.5 C25 40.5 28 41 33 41 C38 41 41 40.5 42.8 38.5 C43.4 36 42.5 33 40.4 30 C40.5 26 38.5 21.5 33 21.5Z" fill="#0e0e0e"/>
<ellipse cx="33.2" cy="34.6" rx="6.6" ry="6.6" fill="url(#bel)"/>
<ellipse cx="33.3" cy="26" rx="5" ry="3.9" fill="#e4e4e4"/>
<ellipse cx="31.3" cy="25.6" rx="1.5" ry="1.9" fill="#fff"/><ellipse cx="35.3" cy="25.6" rx="1.5" ry="1.9" fill="#fff"/>
<circle cx="31.6" cy="26" r="0.7" fill="#222"/><circle cx="35" cy="26" r="0.7" fill="#222"/>
<path d="M30.9 28 L35.7 28 L33.3 30.6Z" fill="#f2c000"/>
<ellipse cx="28" cy="41.6" rx="4.3" ry="1.6" fill="#f6cf00"/>
<ellipse cx="38" cy="41.6" rx="4.3" ry="1.6" fill="#f6cf00"/>
</svg>
<div class="a" style="left:190px;top:186px;width:531px;height:298px;background:#fff;border:1px solid #a9acb2"></div>
<div class="a" style="left:591px;top:187px;width:1px;height:14px;background:#e5e5e5"></div>
<div class="a" style="left:702px;top:187px;width:1px;height:14px;background:#e5e5e5"></div>
<span id="t70" class="t" style="left:196.00px;top:190.46px;font-size:9.5px;font-weight:normal;color:#000;font-family:'Liberation Sans',sans-serif;transform:scaleX(0.8820);transform-origin:left top;">Name</span>
<span id="t71" class="t" style="right:326.96px;top:190.56px;font-size:9.5px;font-weight:normal;color:#000;font-family:'Liberation Sans',sans-serif;transform:scaleX(0.8518);transform-origin:right top;">Size</span>
<svg class="a" style="left:210px;top:203px" width="11" height="11" viewBox="0 0 11 11">
<rect x="0.5" y="0.5" width="10" height="10" fill="#fff" stroke="#333" stroke-width="1"/>
<path d="M2.2 5.6 L4.4 7.8 L8.8 3.2" fill="none" stroke="#333" stroke-width="1.1"/>
</svg>
<svg class="a" style="left:228px;top:202px" width="10" height="13" viewBox="0 0 10 13">
<path d="M0.5 0.5 H6.5 L9.5 3.5 V12.5 H0.5 Z" fill="#f7f7f7" stroke="#a8a8a8" stroke-width="1"/>
<path d="M6.5 0.5 V3.5 H9.5" fill="#e2e2e2" stroke="#a8a8a8" stroke-width="1"/>
</svg>
<span id="t72" class="t" style="left:244.79px;top:204.73px;font-size:10px;font-weight:normal;color:#000;font-family:'Liberation Sans',sans-serif;transform:scaleX(0.8932);transform-origin:left top;">wgetrc</span>
<span id="t73" class="t" style="right:325.88px;top:204.34px;font-size:10px;font-weight:normal;color:#000;font-family:'Liberation Sans',sans-serif;transform:scaleX(0.8565);transform-origin:right top;">4,83 Kb</span>
<span id="t74" class="t" style="left:190.40px;top:485.84px;font-size:10px;font-weight:normal;color:#000;font-family:'Liberation Sans',sans-serif;transform:scaleX(0.8788);transform-origin:left top;">Total Recoverable Files:</span>
<span id="t75" class="t" style="left:292.10px;top:485.84px;font-size:10px;font-weight:normal;color:#000;font-family:'Liberation Sans',sans-serif;transform:scaleX(0.8754);transform-origin:left top;">4,83 Kb of 4,83 Kb</span>
<span id="t76" class="t" style="left:373.30px;top:485.84px;font-size:10px;font-weight:normal;color:#000;font-family:'Liberation Sans',sans-serif;transform:scaleX(0.9097);transform-origin:left top;">(4 942 of 4 942 bytes)</span>
<div class="a" style="left:177px;top:508px;width:557px;height:1px;background:#a0a0a0"></div>
<div class="a" style="left:177px;top:509px;width:557px;height:1px;background:#fff"></div>
<div class="a" style="left:191px;top:519px;width:72px;height:18px;background:#e1e1e1;border:1px solid #adadad"></div><span id="t77" class="t" style="left:212.30px;top:523.83px;font-size:10px;font-weight:normal;color:#000;font-family:'Liberation Sans',sans-serif;transform:scaleX(0.8379);transform-origin:left top;">Help</span>
<svg class="a" style="left:233px;top:525px" width="8" height="6" viewBox="0 0 8 6"><path d="M0.5 0.8 H7.5 L4 5Z" fill="#111"/></svg>
<div class="a" style="left:489px;top:519px;width:72px;height:18px;background:#e1e1e1;border:1px solid #adadad"></div><span id="t78" class="t" style="left:511.00px;top:523.83px;font-size:10px;font-weight:normal;color:#000;font-family:'Liberation Sans',sans-serif;transform:scaleX(0.8415);transform-origin:left top;">&lt; Back</span>
<div class="a" style="left:563px;top:519px;width:73px;height:18px;background:#e5f1fb;border:1.5px solid #2f88e0"></div><span id="t79" class="t" style="left:584.90px;top:523.83px;font-size:10px;font-weight:normal;color:#000;font-family:'Liberation Sans',sans-serif;transform:scaleX(0.9509);transform-origin:left top;">Next &gt;</span>
<div class="a" style="left:647px;top:519px;width:73px;height:18px;background:#e1e1e1;border:1px solid #adadad"></div><span id="t80" class="t" style="left:669.60px;top:523.83px;font-size:10px;font-weight:normal;color:#000;font-family:'Liberation Sans',sans-serif;transform:scaleX(0.8574);transform-origin:left top;">Cancel</span>
</body></html>
